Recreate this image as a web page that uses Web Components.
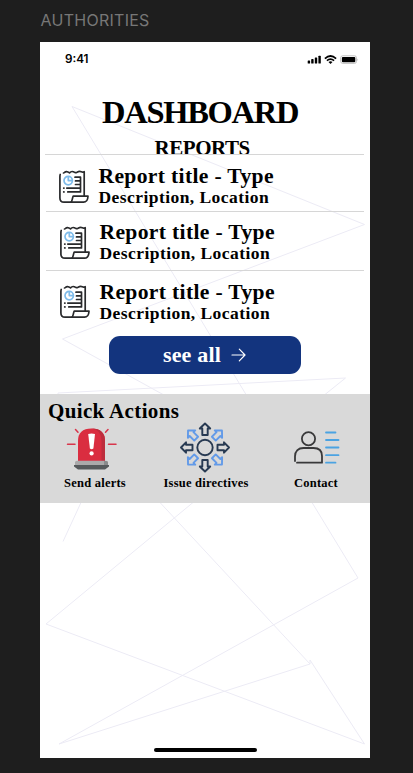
<!DOCTYPE html>
<html lang="en"><head><meta charset="utf-8"><title>Authorities</title>
<style>html,body{margin:0;height:773px;overflow:hidden;background:#1e1e1e}</style></head><body>
<authorities-board></authorities-board>
<script>
const define=(name,html)=>customElements.define(name,class extends HTMLElement{
  constructor(){super();const t=document.createElement('template');t.innerHTML=html;
    this.attachShadow({mode:'open'}).append(t.content.cloneNode(true));}
});

define('line-art',`<style>:host{position:absolute;inset:0;z-index:0}svg{display:block}</style>
<svg width="330" height="716" viewBox="40 41.5 330 716" fill="none" stroke="#ecebf5" stroke-width="1">
<path d="M246 394 72 106 364.5 224 62.500 338.500 163 394M58 394V392.500L345.500 377.500 325 394M81 502 63 541M160 502 310 663.500 59 743.500 358 577.500 312 502M193 502 46 623.500 364.500 743.500 310 659.500V663.500"/></svg>`);

define('status-bar',`<style>
:host{display:flex;height:36px;box-sizing:border-box;padding:10.500px 11px 0 25px;justify-content:space-between;position:relative;font:600 11.700px/15px Inter,sans-serif;color:#000}
svg{display:block;margin-top:1px}</style>
<span>9:41</span>
<svg width="52" height="13" viewBox="307 52.500 52 13">
<g fill="#000"><rect x="307.700" y="60" width="2.400" height="3" rx=".6"/><rect x="311.200" y="58.600" width="2.400" height="4.400" rx=".6"/><rect x="314.800" y="57" width="2.400" height="6" rx=".6"/><rect x="318.400" y="55.200" width="2.400" height="7.800" rx=".6"/></g>
<g fill="none" stroke="#000" stroke-width="1.700"><path d="M324.900 58.100Q330.500 52.900 336.100 58.100M326.900 60.200Q330.500 56.900 334.100 60.200"/></g><path d="M328.500 61.500Q330.500 60 332.500 61.500L330.500 63.500Z"/>
<rect x="340.700" y="55.300" width="15.800" height="7.600" rx="2" fill="#fff" stroke="#bbb" stroke-width=".9"/><rect x="341.900" y="56.400" width="13.400" height="5.400" rx="1"/><path d="M357.500 58v2.400q1.300-1.200 0-2.400" fill="#aaa"/></svg>`);

define('report-icon',`<style>:host{display:block;width:30px;height:34px}svg{display:block}</style>
<svg width="30" height="34" viewBox="0 0 30 34" fill="none" stroke="#292a2c" stroke-width="1.700" stroke-linecap="round" stroke-linejoin="round">
<path d="M1.200 4.500C.8 5.500.9 6.500.9 8V28C.9 31 2.500 32.200 5 32.200H24.500C27.500 32.200 28.800 29.500 29 26.200H14.200C13.700 26.200 13.600 29.300 12.600 31.200Q12 32.200 10.500 32.200M4.500 3C5.600 3 5.700 1.600 7.500 1.700Q9 1.800 10.500 2.900 12.200 1 14.200 1.700 16 3.200 18 2.200 20.500.8 22.200 1.700 23.500 2.700 25.200 1.700V25.500"/>
<path d="M16 7.200H21.500V21.900M16.500 10.900H21M16.500 14.500H21M7.800 18.100H21M8.800 21.900H21M4.700 18.100H5M4.700 21.900H5"/>
<g stroke="#7ebbea"><circle cx="9.200" cy="10.600" r="4.200"/><path d="M9.300 7V10.600H13"/></g></svg>`);

define('report-row',`<style>
:host{display:flex;position:relative;box-sizing:border-box;border-bottom:var(--rule,1.500px solid #d6d6d6);gap:10px;font-family:"Liberation Serif",serif;font-weight:700;color:#000}
report-icon{margin-top:14.500px;flex:none}
div{padding-top:var(--top,8.500px);white-space:nowrap}
.t{display:block;font-size:21.600px;line-height:24px;letter-spacing:.34px}
.d{display:block;font-size:17.500px;line-height:19px;letter-spacing:.44px}</style>
<report-icon></report-icon><div><span class="t"><slot name="title"></slot></span><span class="d"><slot></slot></span></div>`);

define('see-all',`<style>
:host{display:block;position:relative}
button{all:unset;box-sizing:border-box;display:flex;align-items:center;justify-content:center;gap:10px;width:192px;height:38px;border-radius:11px;background:#13347e;color:#fff;font:700 22px/30px "Liberation Serif",serif;letter-spacing:.2px;padding-right:1px}
span{margin-top:-1px}</style>
<button><span><slot></slot></span><svg width="15" height="14" viewBox="0 0 15 14" fill="none" stroke="#fff" stroke-width="1.200" stroke-linecap="round" stroke-linejoin="round"><path d="M1 7H14M8.300 1.200 14 7 8.300 12.800"/></svg></button>`);

define('quick-action',`<style>
:host{display:flex;flex-direction:column;align-items:center;color:#000;font:700 12.500px/16px "Liberation Serif",serif;letter-spacing:.23px;white-space:nowrap}
.i{height:52px;display:flex;margin-bottom:1px}</style>
<div class="i"><slot name="icon"></slot></div><span><slot></slot></span>`);

define('alert-icon',`<style>:host,svg{display:block}:host{margin-right:6px}</style>
<svg width="52" height="52" viewBox="66 422 52 52"><g stroke="#d8354b" stroke-width="1.500" stroke-linecap="round"><path d="M67.500 444.300H75M108.500 444.300H116M75.500 429.500 78 432.300M108 429.500 105.500 432.300"/></g>
<path d="M78 461.500V441Q78 428.500 91.500 428.500T105 441V461.500Z" fill="#da2d40"/><path d="M91.500 428.500Q105 428.500 105 441V461.500H101.500V441Q101.500 429.500 91.500 428.500" fill="#bd2d3d"/>
<path d="M88.200 434Q91.500 433 95 434L93.400 448.500Q91.600 450 89.900 448.500Z" fill="#fff"/><circle cx="91.600" cy="453.400" r="2.100" fill="#fff"/>
<path d="M75 465V462.500Q75 460.800 77 460.800H106Q108 460.800 108 462.500V465Z" fill="#aaa9aa"/><path d="M104 461H106Q108 461 108 462.500V465H104Z" fill="#898b8c"/>
<path d="M74 465H109V466.500L105 469.500H78L74 466.500Z" fill="#565a5c"/></svg>`);

define('directives-icon',`<style>:host,svg{display:block}:host{margin-right:3px}</style>
<svg width="52" height="52" viewBox="-26 -25.500 52 52" fill="none" stroke="#283a52" stroke-width="1.900" stroke-linejoin="round">
<defs><path id="a" d="M-2.700-12.500H2.700V-19H5.200L0-24 -5.200-19H-2.700Z"/></defs>
<circle r="7.700"/><use href="#a"/><use href="#a" transform="rotate(90)"/><use href="#a" transform="rotate(180)"/><use href="#a" transform="rotate(270)"/>
<g stroke="#629ae8"><use href="#a" transform="rotate(45)"/><use href="#a" transform="rotate(135)"/><use href="#a" transform="rotate(225)"/><use href="#a" transform="rotate(315)"/></g></svg>`);

define('contact-icon',`<style>:host,svg{display:block}</style>
<svg width="48" height="52" viewBox="292 422 48 52" fill="none" stroke="#39393a" stroke-width="1.800" stroke-linecap="round" stroke-linejoin="round">
<circle cx="308.500" cy="438.700" r="6.600"/><path d="M295 461V456.500C295 451 298.500 448 303.500 448H313.500C319 448 322 451 322 456V462.700H297"/>
<path stroke="#4ba3e2" d="M326 432.500H335.500M326 440H338.500M326 447.500H338.500M326 455.200H338.500M326 462.700H335.500"/></svg>`);

define('authorities-board',`<style>
:host{display:block;width:413px;height:773px;box-sizing:border-box;padding:9px 43px 0 40px;background:#1e1e1e}
.label{height:32.500px;font:400 16px/22px Inter,sans-serif;color:#777;letter-spacing:.27px;padding-left:.5px;box-sizing:border-box}
main{position:relative;height:716px;background:#fff;display:flex;flex-direction:column;font-family:"Liberation Serif",serif;font-weight:700;color:#000}
h1,h2,h3{margin:0;position:relative;font-weight:700;white-space:nowrap}
h1{font-size:32.500px;line-height:38px;letter-spacing:-1.280px;margin:15.500px 0 0 62px}
h2{font-size:21px;line-height:24px;letter-spacing:-.45px;margin:4.500px 0 0 114.500px;height:20px}
.rule{position:relative;height:1.500px;background:#d6d6d6;margin:-2px 6.500px 0 4.500px}
report-row{margin:0 6px;padding-left:13.500px;height:57.500px}
report-row:first-of-type{padding-left:12.500px;height:56.500px}
report-row:nth-of-type(2){height:59px}
report-row:last-of-type{--rule:none;height:65.500px;--top:9px}
see-all{margin-left:69px}
section{position:relative;background:#d9d9d9;margin-top:20px;height:108.500px}
h3{font-size:21px;line-height:24px;letter-spacing:.36px;padding:5px 0 0 8px;height:28px;box-sizing:border-box}
.actions{display:grid;grid-template-columns:110px 112px 108px}
.home{position:relative;width:103px;height:4px;border-radius:2px;background:#000;margin:auto 0 6px 113.500px}</style>
<div class="label">AUTHORITIES</div>
<main><line-art></line-art><status-bar></status-bar>
<h1>DASHBOARD</h1><h2>REPORTS</h2><div class="rule"></div>
<report-row><span slot="title">Report title - Type</span>Description, Location</report-row>
<report-row><span slot="title">Report title - Type</span>Description, Location</report-row>
<report-row><span slot="title">Report title - Type</span>Description, Location</report-row>
<see-all>see all</see-all>
<section><h3>Quick Actions</h3><div class="actions">
<quick-action><alert-icon slot="icon"></alert-icon>Send alerts</quick-action>
<quick-action><directives-icon slot="icon"></directives-icon>Issue directives</quick-action>
<quick-action><contact-icon slot="icon"></contact-icon>Contact</quick-action></div></section>
<div class="home"></div></main>`);
</script></body></html>
